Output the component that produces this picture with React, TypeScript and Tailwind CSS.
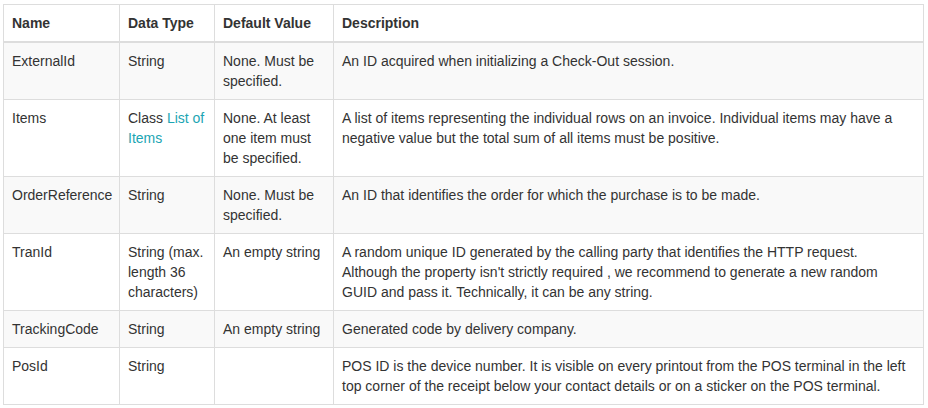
import * as React from "react";

interface Row {
  name: string;
  type: React.ReactNode;
  def: string;
  desc: string;
}

const rows: Row[] = [
  {
    name: "ExternalId",
    type: "String",
    def: "None. Must be specified.",
    desc: "An ID acquired when initializing a Check-Out session.",
  },
  {
    name: "Items",
    type: (
      <>
        Class{" "}
        <a href="#" className="text-[#1ca5b3]">
          List of Items
        </a>
      </>
    ),
    def: "None. At least one item must be specified.",
    desc: "A list of items representing the individual rows on an invoice. Individual items may have a negative value but the total sum of all items must be positive.",
  },
  {
    name: "OrderReference",
    type: "String",
    def: "None. Must be specified.",
    desc: "An ID that identifies the order for which the purchase is to be made.",
  },
  {
    name: "TranId",
    type: "String (max. length 36 characters)",
    def: "An empty string",
    desc: "A random unique ID generated by the calling party that identifies the HTTP request. Although the property isn't strictly required , we recommend to generate a new random GUID and pass it. Technically, it can be any string.",
  },
  {
    name: "TrackingCode",
    type: "String",
    def: "An empty string",
    desc: "Generated code by delivery company.",
  },
  {
    name: "PosId",
    type: "String",
    def: "",
    desc: "POS ID is the device number. It is visible on every printout from the POS terminal in the left top corner of the receipt below your contact details or on a sticker on the POS terminal.",
  },
];

const cell = "border border-[#dddddd] p-2 align-top text-left";

export default function App() {
  return (
    <div className="min-h-screen bg-white pl-[3px] pt-[4px] font-['Liberation_Sans',Arial,sans-serif] text-[14px] leading-5 text-[#333333]">
      <table className="w-[921px] table-fixed border-collapse">
        <colgroup>
          <col className="w-[116px]" />
          <col className="w-[95px]" />
          <col className="w-[119px]" />
          <col />
        </colgroup>
        <thead>
          <tr>
            <th className={`${cell} border-b-2 font-bold`}>Name</th>
            <th className={`${cell} border-b-2 font-bold`}>Data Type</th>
            <th className={`${cell} border-b-2 font-bold`}>Default Value</th>
            <th className={`${cell} border-b-2 font-bold`}>Description</th>
          </tr>
        </thead>
        <tbody>
          {rows.map((r, i) => (
            <tr key={r.name} className={i % 2 === 0 ? "bg-[#f9f9f9]" : ""}>
              <td className={cell}>{r.name}</td>
              <td className={cell}>{r.type}</td>
              <td className={cell}>{r.def}</td>
              <td className={cell}>{r.desc}</td>
            </tr>
          ))}
        </tbody>
      </table>
    </div>
  );
}
